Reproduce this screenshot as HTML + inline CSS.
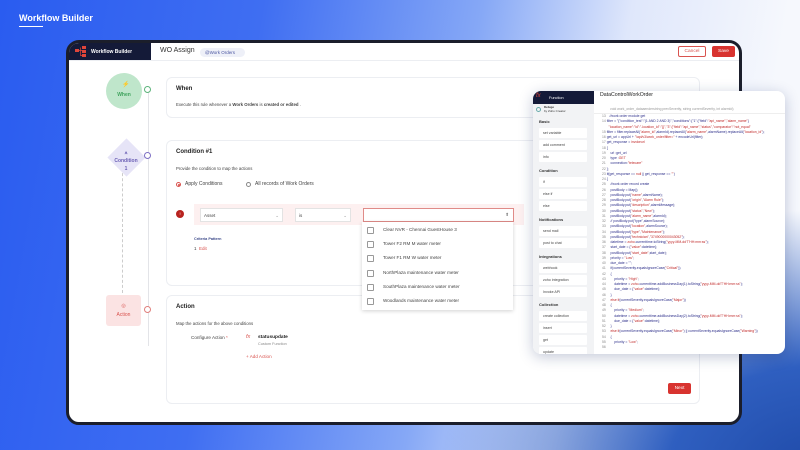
<!DOCTYPE html>
<html><head><meta charset="utf-8"><style>
*{margin:0;padding:0;box-sizing:border-box}
body{width:800px;height:450px;overflow:hidden;font-family:"Liberation Sans",sans-serif;position:relative;
background:radial-gradient(ellipse 380px 260px at 820px 470px,#1f4aa8 0%,#2f5fc0 40%,rgba(60,110,220,0) 100%),
linear-gradient(100deg,#2a5cf0 0%,#3f6ef2 30%,#86a8f6 55%,#dfe7fb 72%,#f6f8fd 90%);}
.a{position:absolute}
.frame{left:66px;top:40px;width:676px;height:385px;background:#fff;border:3px solid #1b1e2b;border-radius:13px;overflow:hidden}
.card{position:absolute;background:#fff;border:1px solid #eceef2;border-radius:6px}
.t{font-size:5px;color:#444}
.sb{position:absolute;left:6px;width:48px;height:10px;background:#fff;font-size:3.6px;color:#444;padding:3px 4px;border-radius:1px}
.sh{position:absolute;left:6px;font-size:4px;color:#333;font-weight:bold}
.code{position:absolute;left:80px;top:12px;font-size:3.4px;line-height:5.25px;color:#2d2f8a;white-space:pre;font-family:"Liberation Sans",sans-serif}
.code i{font-style:normal;color:#c02828}
.code b{font-weight:normal;color:#888}
.dd div{height:14.2px;font-size:4.6px;color:#444;padding-left:21px;line-height:14px;position:relative}
.dd div:before{content:"";position:absolute;left:5px;top:4px;width:5px;height:5px;border:1px solid #999;border-radius:1px}
</style></head><body>
<div class="a" style="left:19px;top:13px;color:#fff;font-size:9px;font-weight:bold">Workflow Builder</div>
<div class="a" style="left:19px;top:26px;width:24px;height:1px;background:#fff"></div>

<div class="a frame">
 <div class="a" style="left:0;top:0;width:82px;height:17px;background:#141a38"></div>
 <svg class="a" style="left:6px;top:3px" width="12" height="11"><rect x="0" y="3" width="4" height="3" fill="#e0453a"/><rect x="7" y="0" width="4" height="3" fill="#e0453a"/><rect x="7" y="4" width="4" height="3" fill="#e0453a"/><rect x="7" y="8" width="4" height="3" fill="#e0453a"/><path d="M4 4.5H7M5.5 1.5V9.5H7" stroke="#e0453a" stroke-width=".7" fill="none"/></svg>
 <div class="a" style="left:22px;top:6px;color:#fff;font-size:5px;font-weight:bold">Workflow Builder</div>
 <div class="a" style="left:91px;top:4px;font-size:7px;color:#333">WO Assign</div>
 <div class="a" style="left:131px;top:5px;width:45px;height:9px;background:#eef0f8;border-radius:5px;font-size:4.5px;color:#4a55a0;padding:2px 5px">@Work Orders</div>
 <div class="a" style="left:609px;top:3px;width:28px;height:11px;border:1px solid #d9534f;border-radius:2px;font-size:4.8px;color:#d9534f;text-align:center;line-height:9px">Cancel</div>
 <div class="a" style="left:643px;top:3px;width:23px;height:11px;background:#d8332f;border-radius:2px;font-size:4.8px;color:#fff;text-align:center;line-height:11px">Save</div>
 <div class="a" style="left:0;top:17px;width:676px;height:1px;background:#eceef2"></div>

 <div class="a" style="left:79px;top:48px;width:1px;height:255px;background:#e3e4e8"></div>
 <div class="a" style="left:53px;top:120px;width:0;height:130px;border-left:1px dashed #ccc"></div>
 <div class="a" style="left:37px;top:30px;width:36px;height:36px;border-radius:50%;background:#bfe6cb;color:#3fa35d;font-size:5px;font-weight:bold;text-align:center;padding-top:19px">When</div>
 <div class="a" style="left:53px;top:38px;color:#3fa35d;font-size:6px">⚡</div>
 <div class="a" style="left:75px;top:43px;width:7px;height:7px;border:1px solid #5cb37a;border-radius:50%;background:#fff"></div>
 <div class="a" style="left:44px;top:101px;width:27px;height:27px;background:#e6e4f7;transform:rotate(45deg)"></div>
 <div class="a" style="left:36px;top:106px;width:42px;text-align:center;color:#6b5fb5;font-size:5px;font-weight:bold;line-height:8px">⩚<br>Condition<br>1</div>
 <div class="a" style="left:75px;top:109px;width:7px;height:7px;border:1px solid #7d6fc4;border-radius:50%;background:#fff"></div>
 <div class="a" style="left:37px;top:252px;width:35px;height:31px;background:#fbe3e3;border-radius:3px;color:#d9534f;font-size:5px;text-align:center;padding-top:7px;line-height:9px">◎<br>Action</div>
 <div class="a" style="left:75px;top:263px;width:7px;height:7px;border:1px solid #e07f7c;border-radius:50%;background:#fff"></div>

 <div class="card" style="left:97px;top:34px;width:534px;height:41px">
  <div class="a" style="left:9px;top:8px;font-size:6px;font-weight:bold;color:#222">When</div>
  <div class="a t" style="left:9px;top:24px;font-size:4.3px">Execute this rule whenever a <b>Work Orders</b> is <b>created or edited</b> .</div>
 </div>
 <div class="card" style="left:97px;top:97px;width:534px;height:146px">
  <div class="a" style="left:9px;top:8px;font-size:6px;font-weight:bold;color:#222">Condition #1</div>
  <div class="a t" style="left:9px;top:25px;font-size:4.3px">Provide the condition to map the actions</div>
  <div class="a" style="left:9px;top:41px;width:5px;height:5px;border:1px solid #d9534f;border-radius:50%;padding:1px"><div style="width:1.5px;height:1.5px;background:#d9534f;border-radius:50%"></div></div>
  <div class="a t" style="left:18px;top:40px">Apply Conditions</div>
  <div class="a" style="left:79px;top:41px;width:5px;height:5px;border:1px solid #888;border-radius:50%"></div>
  <div class="a t" style="left:88px;top:40px">All records of Work Orders</div>
  <div class="a" style="left:27px;top:63px;width:330px;height:21px;background:#fdf0f0"></div>
  <div class="a" style="left:9px;top:69px;width:8px;height:8px;border-radius:50%;background:#b8231f;color:#fff;font-size:4px;text-align:center;line-height:8px">!</div>
  <div class="a" style="left:33px;top:67px;width:83px;height:14px;background:#fff;border:1px solid #e3e3e3;font-size:4.5px;color:#444;padding:4px 3px">Asset<span style="float:right;color:#999">⌄</span></div>
  <div class="a" style="left:128px;top:67px;width:56px;height:14px;background:#fff;border:1px solid #e3e3e3;font-size:4.5px;color:#444;padding:4px 3px">is<span style="float:right;color:#999">⌄</span></div>
  <div class="a" style="left:196px;top:67px;width:151px;height:14px;background:#fff;border:1px solid #e08b88;font-size:4.5px;color:#777;padding:3px 4px;text-align:right">⬆</div>
  <div class="a" style="left:27px;top:96px;font-size:3.8px;color:#3d4a8a;font-weight:bold">Criteria Pattern</div>
  <div class="a" style="left:27px;top:105px;font-size:4.5px;color:#444">1 &nbsp;<span style="color:#d9534f">Edit</span></div>
 </div>
 <div class="card" style="left:97px;top:252px;width:534px;height:109px">
  <div class="a" style="left:9px;top:8px;font-size:6px;font-weight:bold;color:#222">Action</div>
  <div class="a t" style="left:9px;top:25px;font-size:4.3px">Map the actions for the above conditions</div>
  <div class="a t" style="left:24px;top:39px;font-size:4.6px">Configure Action <span style="color:#d9534f">*</span></div>
  <div class="a" style="left:79px;top:38px;font-size:5.5px;color:#d9534f;font-style:italic">fx</div>
  <div class="a" style="left:91px;top:39px;font-size:4.8px;color:#222;font-weight:bold">statusupdate</div>
  <div class="a" style="left:91px;top:46px;font-size:3.8px;color:#888">Custom Function</div>
  <div class="a" style="left:79px;top:58px;font-size:4.6px;color:#d9534f">+ Add Action</div>
  <div class="a" style="left:501px;top:87px;width:23px;height:11px;background:#d8332f;border-radius:2px;color:#fff;font-size:4.8px;text-align:center;line-height:11px">Next</div>
 </div>
 <div class="a dd" style="left:293px;top:179px;width:151px;height:88px;background:#fff;box-shadow:0 1px 4px rgba(0,0,0,.18);padding-top:1px">
  <div>Clear NVR - Chennai GuestHouse 3</div><div>Tower F2 RM M water meter</div><div>Tower F1 RM W water meter</div><div>NorthPlaza maintenance water meter</div><div>SouthPlaza maintenance water meter</div><div>Woodlands maintenance water meter</div>
 </div>
</div>

<div class="a" style="left:533px;top:91px;width:252px;height:263px;background:#fff;border-radius:8px;box-shadow:0 3px 14px rgba(20,40,100,.25);overflow:hidden">
 <div class="a" style="left:0;top:0;width:61px;height:263px;background:#f2f3f5"></div>
 <div class="a" style="left:0;top:0;width:61px;height:13px;background:#141a38"></div>
 <div class="a" style="left:3px;top:2px;color:#e0453a;font-size:6px;font-style:italic">fx</div>
 <div class="a" style="left:16px;top:4.5px;color:#fff;font-size:3.8px">Function</div>
 <div class="a" style="left:3px;top:16px;width:5px;height:5px;border:1px solid #6aa;border-radius:50%"></div>
 <div class="a" style="left:11px;top:15px;font-size:3px;color:#333;font-weight:bold;line-height:3.5px">Deluge<br><span style="font-weight:normal">by Zoho Creator</span></div>
 <div class="sh" style="top:28px">Basic</div>
 <div class="sb" style="top:37px">set variable</div><div class="sb" style="top:49px">add comment</div><div class="sb" style="top:61px">info</div>
 <div class="sh" style="top:77px">Condition</div>
 <div class="sb" style="top:86px">if</div><div class="sb" style="top:98px">else if</div><div class="sb" style="top:110px">else</div>
 <div class="sh" style="top:126px">Notifications</div>
 <div class="sb" style="top:135px">send mail</div><div class="sb" style="top:147px">post to chat</div>
 <div class="sh" style="top:163px">Integrations</div>
 <div class="sb" style="top:172px">webhook</div><div class="sb" style="top:184px">zoho integration</div><div class="sb" style="top:196px">Invoke API</div>
 <div class="sh" style="top:211px">Collection</div>
 <div class="sb" style="top:220px">create collection</div><div class="sb" style="top:232px">insert</div><div class="sb" style="top:244px">get</div><div class="sb" style="top:256px">update</div>
 <div class="a" style="left:67px;top:1px;font-size:5.2px;color:#222">DataControlWorkOrder</div>
 <div class="a" style="left:61px;top:14px;width:191px;height:9px;border-bottom:1px solid #eee"></div>
 <div class="a" style="left:77px;top:16px;font-size:3.4px;color:#999">void work_order_dataaenderstring prevSeverity, string currentSeverity, int alarmId)</div>
 <div class="code" style="left:69px;top:23px"><b>13</b>    //work order module get
<b>14</b> filter = "{"condition_test":"(1 AND 2 AND 3)","conditions":{"1":{"field":<i>"api_name","alarm_name"</i>}
       <i>"location_name":"id":"-location_id":"{}","3":{"field":"api_name","status","comparator":"not_equal"</i>
<b>15</b> filter = filter.replaceAll(<i>"alarm_id"</i>,alarmId).replaceAll(<i>"alarm_name"</i>,alarmName).replaceAll(<i>"location_id"</i>);
<b>16</b> get_url = appUrl + <i>"/api/v3/work_order/filter="</i> + encodeUrl(filter);
<b>17</b> get_response = <i>invokeurl</i>
<b>18</b> [
<b>19</b>     url :get_url
<b>20</b>     type :<i>GET</i>
<b>21</b>     connection:<i>"telecare"</i>
<b>22</b> ];
<b>23</b> if(get_response == <i>null</i> || get_response == <i>""</i>)
<b>24</b> {
<b>25</b>     //work order record create
<b>26</b>     postBody = Map();
<b>27</b>     postBody.put(<i>"name"</i>,alarmName);
<b>28</b>     postBody.put(<i>"origin"</i>,<i>"Alarm Rule"</i>);
<b>29</b>     postBody.put(<i>"description"</i>,alarmMessage);
<b>30</b>     postBody.put(<i>"status"</i>,<i>"New"</i>);
<b>31</b>     postBody.put(<i>"alarm_name"</i>,alarmId);
<b>32</b>     // postBody.put("type",alarmSource);
<b>33</b>     postBody.put(<i>"location"</i>,alarmSource);
<b>34</b>     postBody.put(<i>"type"</i>,<i>"Maintenance"</i>);
<b>35</b>     postBody.put(<i>"technician"</i>,<i>"3749000000043052"</i>);
<b>36</b>     datetime = <i>zoho</i>.currenttime.toString(<i>"yyyy-MM-dd'T'HH:mm:ss"</i>);
<b>37</b>     start_date = {<i>"value"</i>:datetime};
<b>38</b>     postBody.put(<i>"start_date"</i>,start_date);
<b>39</b>     priority = <i>"Low"</i>;
<b>40</b>     due_date = "";
<b>41</b>     if(currentSeverity.equalsIgnoreCase(<i>"Critical"</i>))
<b>42</b>     {
<b>43</b>         priority = <i>"High"</i>;
<b>44</b>         datetime = <i>zoho</i>.currenttime.addBusinessDay(1).toString(<i>"yyyy-MM-dd'T'HH:mm:ss"</i>);
<b>45</b>         due_date = {<i>"value"</i>:datetime};
<b>46</b>     }
<b>47</b>     <i>else if</i>(currentSeverity.equalsIgnoreCase(<i>"Major"</i>))
<b>48</b>     {
<b>49</b>         priority = <i>"Medium"</i>;
<b>50</b>         datetime = <i>zoho</i>.currenttime.addBusinessDay(2).toString(<i>"yyyy-MM-dd'T'HH:mm:ss"</i>);
<b>51</b>         due_date = {<i>"value"</i>:datetime};
<b>52</b>     }
<b>53</b>     <i>else if</i>(currentSeverity.equalsIgnoreCase(<i>"Minor"</i>) || currentSeverity.equalsIgnoreCase(<i>"Warning"</i>))
<b>54</b>     {
<b>55</b>         priority = <i>"Low"</i>;
<b>56</b></div>
</div>
</body></html>
